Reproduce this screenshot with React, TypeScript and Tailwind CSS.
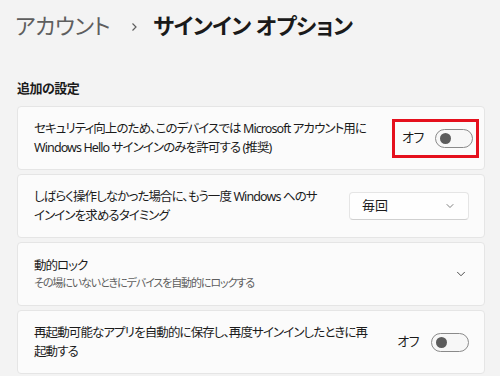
import { ChevronDown } from "lucide-react";

const font = "font-['Noto_Sans','Noto_Sans_CJK_JP',sans-serif] [font-feature-settings:'palt']";

function Toggle() {
    return (
        <div className="flex h-[19px] w-[38px] shrink-0 items-center rounded-full border border-[#8a8a8a] bg-[#f7f7f7] px-[4px]">
            <div className="h-[11px] w-[11px] rounded-full bg-[#5c5c5c]" />
        </div>
    );
}

export default function App() {
    return (
        <div className={`h-[376px] w-[500px] overflow-hidden bg-[#f3f3f3] text-[#1b1b1b] ${font}`}>
            {/* Breadcrumb */}
            <div className="flex h-[48px] items-center whitespace-nowrap pl-[15px] pt-[2px]">
                <span className="text-[22px] leading-none tracking-[-0.4px] text-[#5e5e5e]">アカウント</span>
                <svg width="7" height="10" viewBox="0 0 7 10" className="ml-[21px] mr-[15px] mt-[3px]">
                    <path d="M1.5 1.5 L5 5 L1.5 8.5" fill="none" stroke="#5e5e5e" strokeWidth="1.2" />
                </svg>
                <span className="text-[22px] font-semibold leading-none tracking-[-0.6px] text-[#1a1a1a]">サインイン オプション</span>
            </div>

            <div className="px-[17px] pt-[30px] pr-[15px]">
                <div className="mb-[8px] text-[13px] font-bold leading-[20px] tracking-[-0.5px]">追加の設定</div>

                <div className="flex flex-col gap-[4px]">
                    {/* Card 1 */}
                    <div className="flex h-[64px] items-center rounded-[4px] border border-[#e5e5e5] bg-[#fbfbfb] pl-[16px] pr-[5px]">
                        <div className="min-w-0 flex-1 whitespace-nowrap text-[12.5px] leading-[19px] tracking-[-0.9px]">
                            セキュリティ向上のため、このデバイスでは Microsoft アカウント用に
                            <br />
                            Windows Hello サインインのみを許可する (推奨)
                        </div>
                        <div className="flex h-[39px] w-[87px] shrink-0 items-center border-[3px] border-[#e5101d] pl-[7px]">
                            <span className="mr-[11px] whitespace-nowrap text-[13px] tracking-[-0.5px]">オフ</span>
                            <Toggle />
                        </div>
                    </div>

                    {/* Card 2 */}
                    <div className="flex h-[64px] items-center rounded-[4px] border border-[#e5e5e5] bg-[#fbfbfb] pl-[16px] pr-[15px]">
                        <div className="min-w-0 flex-1 whitespace-nowrap text-[12.5px] leading-[19px] tracking-[-0.9px]">
                            しばらく操作しなかった場合に、もう一度 Windows へのサ
                            <br />
                            インインを求めるタイミング
                        </div>
                        <div className="flex h-[28px] w-[120px] shrink-0 items-center justify-between rounded-[4px] border border-[#e5e5e5] border-b-[#d0d0d0] bg-[#fefefe] pl-[12px] pr-[12px]">
                            <span className="text-[13px]">毎回</span>
                            <ChevronDown size={12} strokeWidth={1.5} className="text-[#555]" />
                        </div>
                    </div>

                    {/* Card 3 */}
                    <div className="flex h-[64px] items-center rounded-[4px] border border-[#e5e5e5] bg-[#fbfbfb] pl-[16px] pr-[16px]">
                        <div className="min-w-0 flex-1 whitespace-nowrap">
                            <div className="text-[12.5px] leading-[18px] tracking-[-1px]">動的ロック</div>
                            <div className="text-[11px] leading-[16px] tracking-[-1.1px] text-[#5f5f5f]">その場にいないときにデバイスを自動的にロックする</div>
                        </div>
                        <ChevronDown size={14} strokeWidth={1.5} className="text-[#333]" />
                    </div>

                    {/* Card 4 */}
                    <div className="flex h-[64px] items-center rounded-[4px] border border-[#e5e5e5] bg-[#fbfbfb] pl-[16px] pr-[15px]">
                        <div className="min-w-0 flex-1 whitespace-nowrap text-[12.5px] leading-[19px] tracking-[-0.9px]">
                            再起動可能なアプリを自動的に保存し、再度サインインしたときに再
                            <br />
                            起動する
                        </div>
                        <span className="mr-[12px] whitespace-nowrap text-[13px] tracking-[-0.5px]">オフ</span>
                        <Toggle />
                    </div>
                </div>
            </div>
        </div>
    );
}
